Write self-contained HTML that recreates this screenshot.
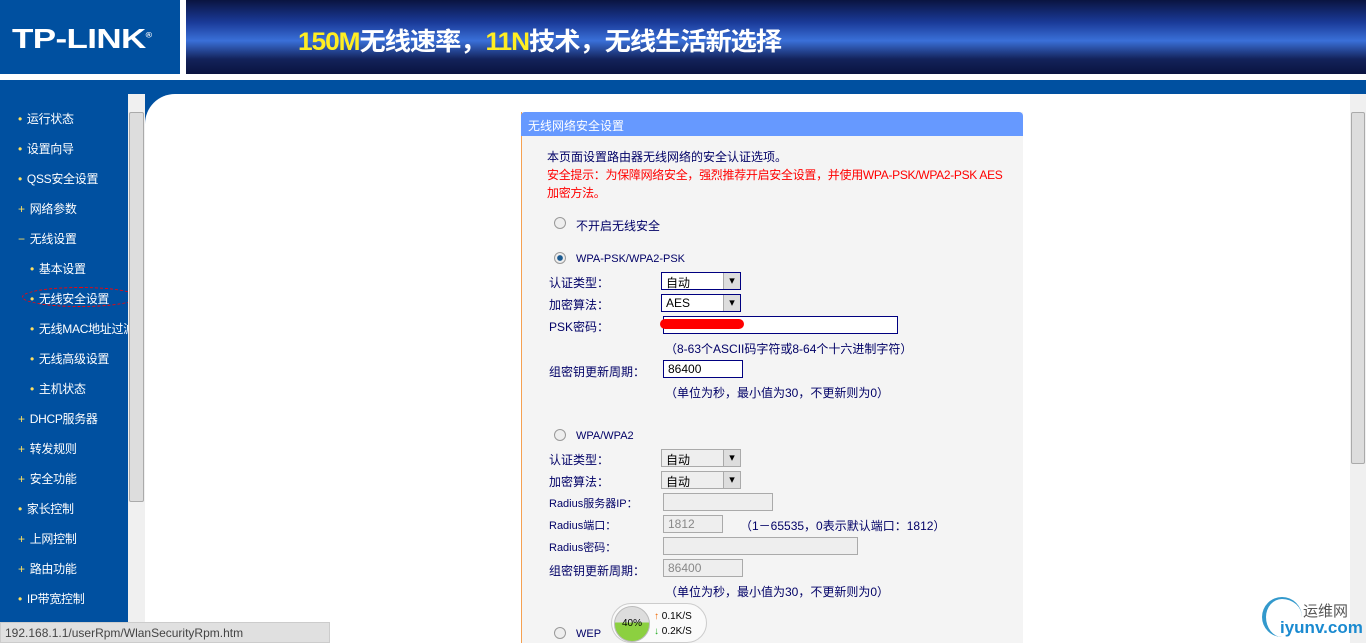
<!DOCTYPE html>
<html><head><meta charset="utf-8"><style>
*{margin:0;padding:0;box-sizing:border-box}
body{width:1366px;height:643px;overflow:hidden;position:relative;background:#fff;font-family:"Liberation Sans","Noto Sans CJK SC",sans-serif;font-size:12px}
.a{position:absolute}
#logo{left:0;top:0;width:180px;height:74px;background:#0050a0;color:#fff}
#logo span{position:absolute;left:12px;top:23px;font:bold 28px "Liberation Sans",sans-serif;transform:scaleX(1.25);transform-origin:left;letter-spacing:-0.5px}
#ban{left:186px;top:0;width:1180px;height:74px;background:linear-gradient(180deg,#0a1440 0%,#1a3a98 30%,#3a70d8 55%,#13225a 80%,#0a1440 100%)}
#ban span{position:absolute;left:112px;top:22px;font:bold 25px "Liberation Sans","Noto Sans CJK SC",sans-serif;color:#fff;white-space:nowrap;letter-spacing:-1px;transform:scaleX(1.05);transform-origin:left}
#ban b{color:#ffee22}
#band{left:0;top:80px;width:1366px;height:14px;background:#0050a0}
#side{left:0;top:94px;width:128px;height:530px;background:#0050a0;color:#fff;overflow:hidden}
#side div{position:absolute;font-size:12px;white-space:nowrap;letter-spacing:-0.3px}
#side i{color:#ffe060;font-style:normal;margin-right:5px}
#ss{left:128px;top:94px;width:17px;height:530px;background:#f0f0f0}
#corner{left:145px;top:94px;width:30px;height:30px;background:#0050a0}
#corner:after{content:"";position:absolute;left:0;top:0;width:30px;height:30px;background:#fff;border-top-left-radius:30px}
#rs{left:1350px;top:94px;width:16px;height:549px;background:#f0f0f0}
#panel{left:521px;top:112px;width:502px;height:531px;background:#f4f4f4;border-left:1px solid #f5a050}
#ph{left:521px;top:112px;width:502px;height:24px;background:#6699ff;color:#fff;padding:5px 7px;border-radius:4px 4px 0 0}
.t{position:absolute;white-space:nowrap;font-size:12px;color:#000066}
.r{color:#f00;letter-spacing:-0.3px}
.in{position:absolute;height:18px;border:1px solid #000080;background:#fff;font-size:12px;padding:1px 4px}
.dis{border-color:#aaa;background:#eee;color:#888}
.sel:after{content:"▾";position:absolute;right:0;top:0;width:16px;height:16px;background:#ddd;border-left:1px solid #aaa;text-align:center;line-height:16px;font-size:11px}
.rad{position:absolute;width:12px;height:12px;border-radius:50%;border:1px solid #999;background:#eee}
</style></head><body>
<div class="a" id="logo"><span>TP-LINK<sup style="font-size:7px">®</sup></span></div>
<div class="a" id="ban"><span><b>150M</b>无线速率，<b>11N</b>技术，无线生活新选择</span></div>
<div class="a" id="band"></div>
<div class="a" id="side">
<div style="left:18px;top:16px"><i>•</i>运行状态</div>
<div style="left:18px;top:46px"><i>•</i>设置向导</div>
<div style="left:18px;top:76px"><i>•</i>QSS安全设置</div>
<div style="left:18px;top:106px"><i>+</i>网络参数</div>
<div style="left:18px;top:136px"><i>−</i>无线设置</div>
<div style="left:30px;top:166px"><i>•</i>基本设置</div>
<div style="left:30px;top:196px"><i>•</i>无线安全设置</div>
<div style="left:22px;top:193px;width:116px;height:20px;border:1px dashed #f00;border-radius:50%"></div>
<div style="left:30px;top:226px"><i>•</i>无线MAC地址过滤</div>
<div style="left:30px;top:256px"><i>•</i>无线高级设置</div>
<div style="left:30px;top:286px"><i>•</i>主机状态</div>
<div style="left:18px;top:316px"><i>+</i>DHCP服务器</div>
<div style="left:18px;top:346px"><i>+</i>转发规则</div>
<div style="left:18px;top:376px"><i>+</i>安全功能</div>
<div style="left:18px;top:406px"><i>•</i>家长控制</div>
<div style="left:18px;top:436px"><i>+</i>上网控制</div>
<div style="left:18px;top:466px"><i>+</i>路由功能</div>
<div style="left:18px;top:496px"><i>•</i>IP带宽控制</div>
</div>
<div class="a" id="ss"><div class="a" style="left:1px;top:18px;width:15px;height:390px;background:#ddd;border:1px solid #aaa;border-radius:2px"></div></div>
<div class="a" id="corner"></div>
<div class="a" id="rs"><div class="a" style="left:1px;top:18px;width:14px;height:352px;background:#ddd;border:1px solid #aaa;border-radius:2px"></div></div>
<div class="a" id="panel"></div>
<div class="a" id="ph">无线网络安全设置</div>
<div class="t" style="left:547px;top:148px">本页面设置路由器无线网络的安全认证选项。</div>
<div class="t r" style="left:547px;top:166px">安全提示：为保障网络安全，强烈推荐开启安全设置，并使用WPA-PSK/WPA2-PSK AES</div>
<div class="t r" style="left:547px;top:184px">加密方法。</div>
<div class="rad" style="left:554px;top:217px"></div><div class="t" style="left:576px;top:217px">不开启无线安全</div>
<div class="rad" style="left:554px;top:252px;background:radial-gradient(#1a5a90 35%,#eee 45%)"></div><div class="t" style="left:576px;top:253px;font-size:11px">WPA-PSK/WPA2-PSK</div>
<div class="t" style="left:549px;top:274px">认证类型：</div><div class="in sel" style="left:661px;top:272px;width:80px">自动</div>
<div class="t" style="left:549px;top:296px">加密算法：</div><div class="in sel" style="left:661px;top:294px;width:80px">AES</div>
<div class="t" style="left:549px;top:318px">PSK密码：</div><div class="in" style="left:663px;top:316px;width:235px"></div>
<div class="a" style="left:660px;top:319px;width:84px;height:10px;background:#f00;border-radius:6px"></div>
<div class="t" style="left:665px;top:340px">（8-63个ASCII码字符或8-64个十六进制字符）</div>
<div class="t" style="left:549px;top:363px">组密钥更新周期：</div><div class="in" style="left:663px;top:360px;width:80px">86400</div>
<div class="t" style="left:665px;top:384px">（单位为秒，最小值为30，不更新则为0）</div>
<div class="rad" style="left:554px;top:429px"></div><div class="t" style="left:576px;top:430px;font-size:11px">WPA/WPA2</div>
<div class="t" style="left:549px;top:451px">认证类型：</div><div class="in sel dis" style="left:661px;top:449px;width:80px;color:#000">自动</div>
<div class="t" style="left:549px;top:473px">加密算法：</div><div class="in sel dis" style="left:661px;top:471px;width:80px;color:#000">自动</div>
<div class="t" style="left:549px;top:495px;font-size:11px">Radius服务器IP：</div><div class="in dis" style="left:663px;top:493px;width:110px"></div>
<div class="t" style="left:549px;top:517px;font-size:11px">Radius端口：</div><div class="in dis" style="left:663px;top:515px;width:60px">1812</div>
<div class="t" style="left:740px;top:517px">（1－65535，0表示默认端口：1812）</div>
<div class="t" style="left:549px;top:539px;font-size:11px">Radius密码：</div><div class="in dis" style="left:663px;top:537px;width:195px"></div>
<div class="t" style="left:549px;top:562px">组密钥更新周期：</div><div class="in dis" style="left:663px;top:559px;width:80px">86400</div>
<div class="t" style="left:665px;top:583px">（单位为秒，最小值为30，不更新则为0）</div>
<div class="rad" style="left:554px;top:627px"></div><div class="t" style="left:576px;top:628px;font-size:11px">WEP</div>
<div class="a" style="left:611px;top:603px;width:96px;height:40px;background:#fafafa;border:1px solid #ccc;border-radius:20px"></div>
<div class="a" style="left:614px;top:606px;width:36px;height:36px;border-radius:50%;background:linear-gradient(#ddd 45%,#8cd040 45%);border:1px solid #bbb;font-size:10px;text-align:center;line-height:34px">40%</div>
<div class="t" style="left:654px;top:611px;font-size:10px;color:#000"><span style="color:#e60">↑</span> 0.1K/S</div>
<div class="t" style="left:654px;top:626px;font-size:10px;color:#000"><span style="color:#2a2">↓</span> 0.2K/S</div>
<div class="a" style="left:0;top:622px;width:330px;height:21px;background:#e0e0e0;border:1px solid #ccc;color:#444;font-size:12px;padding:3px 4px">192.168.1.1/userRpm/WlanSecurityRpm.htm</div>
<div class="a" style="left:1262px;top:597px;width:40px;height:40px;border-radius:50%;border-left:4px solid #39c;border-top:2px solid #39c"></div>
<div class="t" style="left:1303px;top:600px;font-size:15px;color:#555">运维网</div>
<div class="t" style="left:1280px;top:618px;font-size:17px;color:#1a8ad0;font-weight:bold">iyunv.com</div>
</body></html>
